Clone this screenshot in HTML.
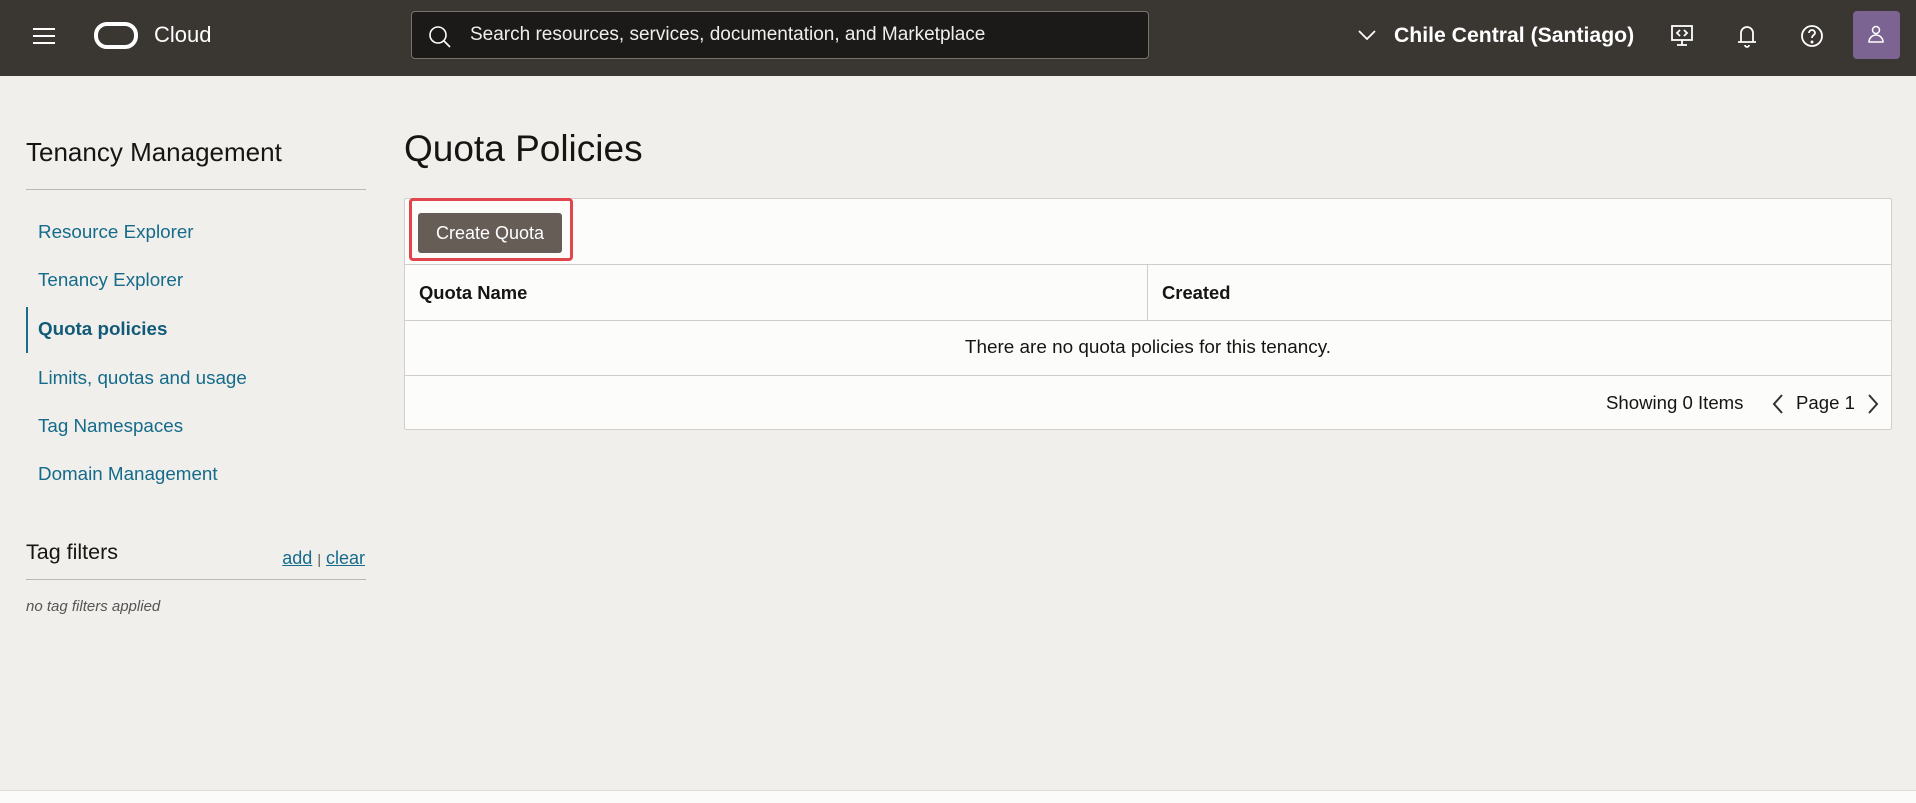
<!DOCTYPE html>
<html><head><meta charset="utf-8"><style>
*{box-sizing:border-box;margin:0;padding:0}
body{width:1916px;height:803px;overflow:hidden;font-family:"Liberation Sans",sans-serif;background:#f1efec;position:relative}
.hdr{position:absolute;left:0;top:0;width:1916px;height:76px;background:#3a3632}
.abs{position:absolute}
.nav a{position:absolute;left:38px;font-size:18.8px;color:#146b8a;text-decoration:none;line-height:22px}
.panel{position:absolute;left:404px;top:198px;width:1488px;height:232px;background:#fcfcfb;border:1px solid #d3d0cc;border-radius:2px}
.hl{position:absolute;left:0;width:100%;height:1px;background:#d0cdca}
</style></head><body>
<div class="hdr">
 <div class="abs" style="left:33px;top:28px;width:22px;height:2px;background:#fff;box-shadow:0 7px 0 #fff,0 14px 0 #fff"></div>
 <div class="abs" style="left:94px;top:22px;width:44px;height:27px;border:4px solid #fff;border-radius:13px"></div>
 <div class="abs" style="left:154px;top:22px;color:#fff;font-size:22px">Cloud</div>
 <div class="abs" style="left:411px;top:11px;width:738px;height:48px;background:#1c1a18;border:1px solid #77726c;border-radius:4px">
  <svg class="abs" style="left:16px;top:13px" width="24" height="24" viewBox="0 0 24 24" fill="none" stroke="#fff" stroke-width="1.6"><circle cx="10" cy="10" r="8"/><path d="M16 16l6 6"/></svg>
  <div class="abs" style="left:58px;top:12px;color:#eee;font-size:19px">Search resources, services, documentation, and Marketplace</div>
 </div>
 <svg class="abs" style="left:1357px;top:28px" width="20" height="14" viewBox="0 0 20 14" fill="none" stroke="#fff" stroke-width="1.8"><path d="M2 3l8 8 8-8"/></svg>
 <div class="abs" style="left:1394px;top:24px;color:#fff;font-size:21.2px;font-weight:bold">Chile Central (Santiago)</div>
 <svg class="abs" style="left:1669px;top:23px" width="26" height="26" viewBox="0 0 26 26" fill="none" stroke="#fff" stroke-width="1.8"><rect x="3" y="3" width="20" height="14"/><path d="M13 17v5M8 22h10M11 7l-3 3 3 3M15 7l3 3-3 3"/></svg>
 <svg class="abs" style="left:1735px;top:22px" width="24" height="28" viewBox="0 0 24 28" fill="none" stroke="#fff" stroke-width="1.8"><path d="M6 20V11a6 6 0 0112 0v9M3 20h18M10 23a2 2 0 004 0"/></svg>
 <svg class="abs" style="left:1800px;top:24px" width="24" height="24" viewBox="0 0 24 24" fill="none" stroke="#fff" stroke-width="1.8"><circle cx="12" cy="12" r="10"/><path d="M9 9a3 3 0 116 0c0 2-3 2-3 5"/><circle cx="12" cy="18" r=".6" fill="#fff"/></svg>
 <div class="abs" style="left:1853px;top:11px;width:47px;height:48px;background:#7b6491;border-radius:4px">
  <svg class="abs" style="left:13px;top:13px" width="20" height="22" viewBox="0 0 20 22" fill="none" stroke="#fff" stroke-width="1.5"><circle cx="10" cy="6" r="3.5"/><path d="M3 18a7 7 0 0114 0z"/></svg>
 </div>
</div>
<div class="abs" style="left:26px;top:137px;font-size:26px;color:#161513">Tenancy Management</div>
<div class="abs" style="left:26px;top:189px;width:340px;height:1px;background:#bcb8b4"></div>
<div class="nav">
 <a style="top:221px">Resource Explorer</a>
 <a style="top:269px">Tenancy Explorer</a>
 <a style="top:318px;font-weight:bold;color:#125b78">Quota policies</a>
 <a style="top:367px">Limits, quotas and usage</a>
 <a style="top:415px">Tag Namespaces</a>
 <a style="top:463px">Domain Management</a>
</div>
<div class="abs" style="left:26px;top:307px;width:2px;height:46px;background:#1f6c8a"></div>
<div class="abs" style="left:26px;top:540px;font-size:21.5px;color:#161513">Tag filters</div>
<div class="abs" style="right:1551px;top:548px;font-size:18px;color:#146b8a"><u>add</u> <span style="color:#555;font-size:14px">|</span> <u>clear</u></div>
<div class="abs" style="left:26px;top:579px;width:340px;height:1px;background:#bcb8b4"></div>
<div class="abs" style="left:26px;top:598px;font-size:15px;font-style:italic;color:#555">no tag filters applied</div>
<div class="abs" style="left:404px;top:128px;font-size:37px;color:#161513">Quota Policies</div>
<div class="panel">
 <div class="abs" style="left:13px;top:14px;width:144px;height:40px;background:#665d57;border-radius:3px;color:#fff;font-size:18px;text-align:center;line-height:40px">Create Quota</div>
 <div class="hl" style="top:65px"></div>
 <div class="abs" style="left:742px;top:65px;width:1px;height:56px;background:#d0cdca"></div>
 <div class="abs" style="left:14px;top:83px;font-size:18.4px;font-weight:bold;color:#161513">Quota Name</div>
 <div class="abs" style="left:757px;top:83px;font-size:18.4px;font-weight:bold;color:#161513">Created</div>
 <div class="hl" style="top:121px"></div>
 <div class="abs" style="left:0;width:100%;top:138px;text-align:center;font-size:18.9px;color:#161513">There are no quota policies for this tenancy.</div>
 <div class="hl" style="top:176px"></div>
 <div class="abs" style="left:1201px;top:193px;font-size:18.6px;color:#161513">Showing 0 Items</div>
 <svg class="abs" style="left:1366px;top:194px" width="14" height="22" viewBox="0 0 14 22" fill="none" stroke="#333" stroke-width="2"><path d="M11 2L3 11l8 9"/></svg>
 <div class="abs" style="left:1391px;top:193px;font-size:18.6px;color:#161513">Page 1</div>
 <svg class="abs" style="left:1461px;top:194px" width="14" height="22" viewBox="0 0 14 22" fill="none" stroke="#333" stroke-width="2"><path d="M3 2l8 9-8 9"/></svg>
</div>
<div class="abs" style="left:409px;top:198px;width:164px;height:63px;border:3px solid #e0464b;border-radius:4px"></div>
<div class="abs" style="left:0;top:790px;width:1916px;height:13px;background:#fbfbfa;border-top:1px solid #ddd"></div>
</body></html>
